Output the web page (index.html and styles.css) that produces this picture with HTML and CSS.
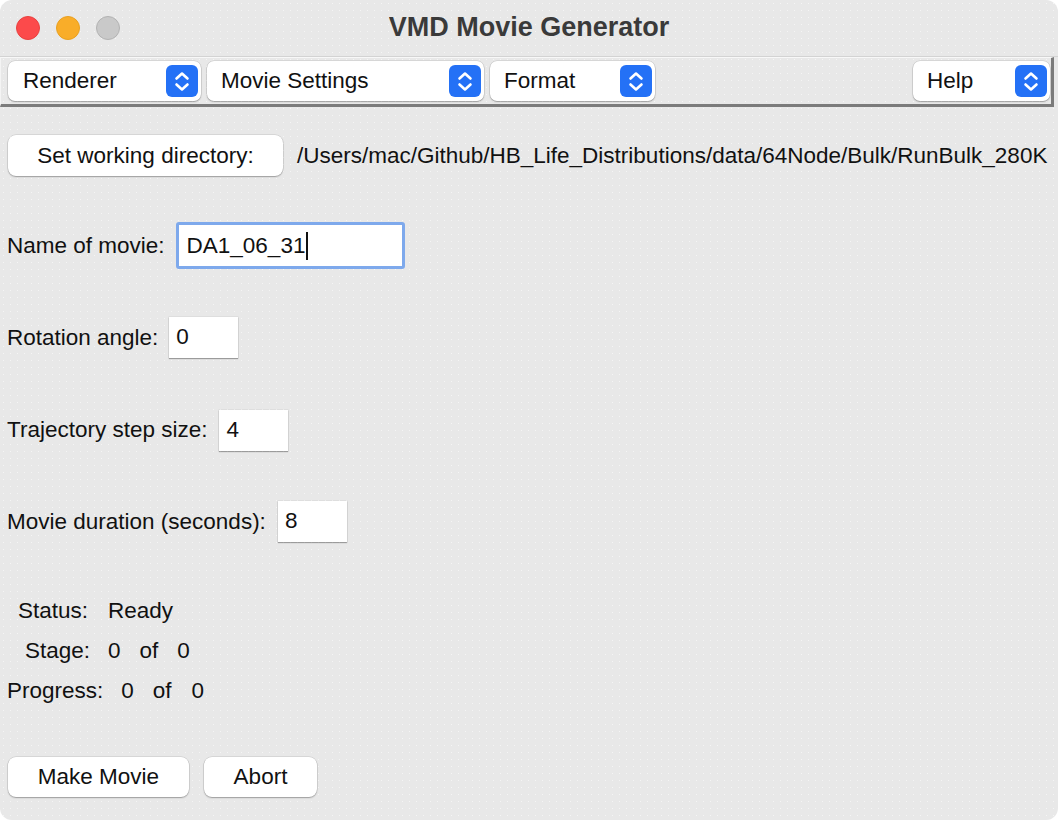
FILE: index.html
```html
<!DOCTYPE html>
<html>
<head>
<meta charset="utf-8">
<link rel="stylesheet" href="styles.css">
</head>
<body>
<div class="window">
  <div class="titlebar">
    <div class="lights">
      <span class="light red"></span>
      <span class="light yellow"></span>
      <span class="light gray"></span>
    </div>
    <div class="title">VMD Movie Generator</div>
  </div>
  <div class="menubar">
    <div class="menubtn w-renderer"><span>Renderer</span><span class="spin"><svg width="32" height="32" viewBox="0 0 32 32"><path d="M10.5 13.5 L16 8.5 L21.5 13.5 M10.5 19.5 L16 24.5 L21.5 19.5" fill="none" stroke="#fff" stroke-width="2.6" stroke-linecap="round" stroke-linejoin="round"/></svg></span></div>
    <div class="menubtn w-movie"><span>Movie Settings</span><span class="spin"><svg width="32" height="32" viewBox="0 0 32 32"><path d="M10.5 13.5 L16 8.5 L21.5 13.5 M10.5 19.5 L16 24.5 L21.5 19.5" fill="none" stroke="#fff" stroke-width="2.6" stroke-linecap="round" stroke-linejoin="round"/></svg></span></div>
    <div class="menubtn w-format"><span>Format</span><span class="spin"><svg width="32" height="32" viewBox="0 0 32 32"><path d="M10.5 13.5 L16 8.5 L21.5 13.5 M10.5 19.5 L16 24.5 L21.5 19.5" fill="none" stroke="#fff" stroke-width="2.6" stroke-linecap="round" stroke-linejoin="round"/></svg></span></div>
    <div class="spacer"></div>
    <div class="menubtn w-help"><span>Help</span><span class="spin"><svg width="32" height="32" viewBox="0 0 32 32"><path d="M10.5 13.5 L16 8.5 L21.5 13.5 M10.5 19.5 L16 24.5 L21.5 19.5" fill="none" stroke="#fff" stroke-width="2.6" stroke-linecap="round" stroke-linejoin="round"/></svg></span></div>
  </div>
  <div class="content">
    <div class="row row-dir">
      <div class="btn btn-dir">Set working directory:</div>
      <div class="path">/Users/mac/Github/HB_Life_Distributions/data/64Node/Bulk/RunBulk_280K</div>
    </div>
    <div class="row row-name">
      <div class="label">Name of movie:</div>
      <div class="entry focus">DA1_06_31<span class="caret"></span></div>
    </div>
    <div class="row row-rot">
      <div class="label">Rotation angle:</div>
      <div class="entry small">0</div>
    </div>
    <div class="row row-traj">
      <div class="label">Trajectory step size:</div>
      <div class="entry small">4</div>
    </div>
    <div class="row row-dur">
      <div class="label">Movie duration (seconds):</div>
      <div class="entry small">8</div>
    </div>
    <div class="status">
      <div class="srow s-status"><span>Status:</span><span class="v1">Ready</span></div>
      <div class="srow s-stage"><span>Stage:</span><span class="v1">0</span><span class="of">of</span><span class="v2">0</span></div>
      <div class="srow s-progress"><span>Progress:</span><span class="v1">0</span><span class="of">of</span><span class="v2">0</span></div>
    </div>
    <div class="row row-actions">
      <div class="btn btn-make">Make Movie</div>
      <div class="btn btn-abort">Abort</div>
    </div>
  </div>
</div>
</body>
</html>
```
FILE: styles.css
```css
html, body {
  margin: 0;
  padding: 0;
  background: #ffffff;
}
body {
  width: 1058px;
  height: 820px;
  overflow: hidden;
  font-family: "Liberation Sans", Arial, sans-serif;
  font-size: 22.5px;
  color: #111111;
}
.window {
  width: 1058px;
  height: 820px;
  border-radius: 12px;
  background-color: #e8e8e8;
  background-image: radial-gradient(circle, rgba(255,255,255,0.55) 0.7px, transparent 1px);
  background-size: 7px 7px;
  overflow: hidden;
  box-sizing: border-box;
}
.titlebar {
  position: relative;
  height: 56px;
  border-bottom: 1px solid #d3d3d3;
  display: flex;
  align-items: center;
  justify-content: center;
}
.lights {
  position: absolute;
  left: 16px;
  top: 16px;
  display: flex;
  gap: 16px;
}
.light {
  width: 24px;
  height: 24px;
  border-radius: 50%;
  box-sizing: border-box;
}
.red { background: #fc4a4b; border: 1px solid #e9413f; }
.yellow { background: #f9ad29; border: 1px solid #e9a020; }
.gray { background: #c9c9c9; border: 1px solid #b3b3b3; }
.title {
  font-weight: bold;
  font-size: 27px;
  color: #3a3a3a;
  margin-top: -2px;
}
.menubar {
  display: flex;
  align-items: center;
  gap: 6px;
  height: 40px;
  padding: 3px 1px 3px 7px;
  box-sizing: content-box;
  width: 1042px;
  border-top: 1px solid #f8f8f8;
  border-left: 1px solid #f4f4f4;
  border-bottom: 3px solid #7b7b7b;
  border-right: 3px solid #7b7b7b;
  margin-right: 5px;
}
.spacer { flex: 1; }
.menubtn {
  height: 40px;
  box-sizing: border-box;
  background: #ffffff;
  border-radius: 7px;
  box-shadow: 0 1px 1.5px rgba(0,0,0,0.28), 0 0 0 0.5px rgba(0,0,0,0.14);
  display: flex;
  align-items: center;
  justify-content: space-between;
  padding: 0 3px 0 15px;
}
.w-renderer { width: 193px; }
.w-movie { width: 277px; padding-left: 14px; }
.w-format { width: 165px; padding-left: 14px; }
.w-help { width: 137px; padding-left: 14px; }
.spin {
  width: 32px;
  height: 32px;
  border-radius: 6px;
  background: #2471f6;
  display: flex;
}
.content {
  padding: 0 0 0 7px;
}
.row {
  display: flex;
  align-items: center;
}
.row-dir { margin-top: 28px; height: 41px; }
.row-name { margin-top: 46px; height: 47px; }
.row-rot { margin-top: 48px; height: 41px; }
.row-traj { margin-top: 51px; height: 42px; }
.row-dur { margin-top: 50px; height: 41px; }
.btn {
  height: 41px;
  box-sizing: border-box;
  background: #ffffff;
  border-radius: 8px;
  box-shadow: 0 1px 1.5px rgba(0,0,0,0.28), 0 0 0 0.5px rgba(0,0,0,0.14);
  display: flex;
  align-items: center;
  justify-content: center;
}
.btn-dir { width: 275px; margin-left: 1px; }
.path { margin-left: 14px; white-space: nowrap; }
.label { margin-right: 11px; white-space: nowrap; }
.row-traj .label, .row-dur .label { margin-right: 12px; }
.entry {
  background: #ffffff;
  box-sizing: border-box;
  display: flex;
  align-items: center;
  box-shadow: 0 1px 1px rgba(0,0,0,0.3), 0 0 0 0.5px rgba(0,0,0,0.08);
}
.entry.small {
  width: 69px;
  height: 41px;
  padding-left: 7px;
  align-items: flex-start;
  padding-top: 7px;
}
.entry.focus {
  width: 229px;
  height: 47px;
  border: 3px solid #7ea9ec;
  border-radius: 3px;
  padding-left: 8px;
  box-shadow: none;
}
.caret {
  display: inline-block;
  width: 1.5px;
  height: 28px;
  background: #111;
  margin-left: 1px;
}
.status { margin-top: 49px; }
.srow {
  display: flex;
  height: 40px;
  line-height: 40px;
}
.s-status { padding-left: 11px; }
.s-status .v1 { margin-left: 20px; }
.s-stage { padding-left: 18px; }
.s-stage .v1 { margin-left: 18px; }
.s-stage .of { margin-left: 19px; }
.s-stage .v2 { margin-left: 19px; }
.s-progress .v1 { margin-left: 18px; }
.s-progress .of { margin-left: 19px; }
.s-progress .v2 { margin-left: 20px; }
.row-actions { margin-top: 46px; gap: 15px; }
.btn-make { width: 181px; height: 40px; margin-left: 1px; }
.btn-abort { width: 113px; height: 40px; }
```
